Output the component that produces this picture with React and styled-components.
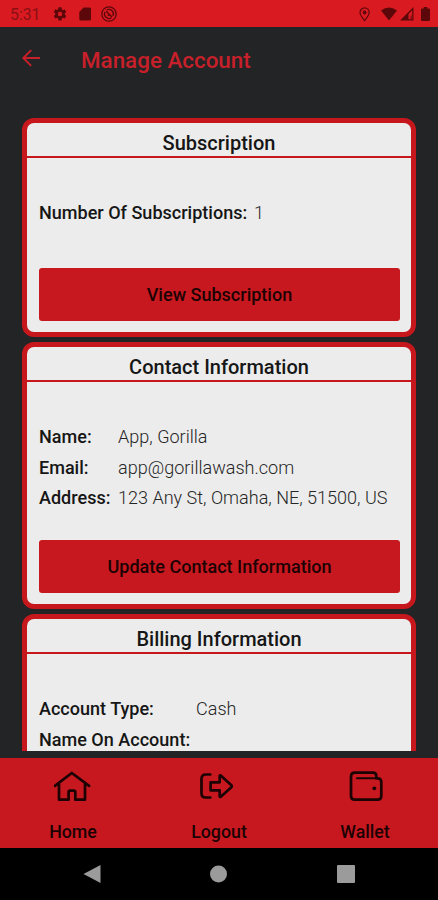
import React from 'react'
import styled, { createGlobalStyle } from 'styled-components'

const GlobalStyle = createGlobalStyle`
  * {
    box-sizing: border-box;
  }
  body {
    margin: 0;
    background: #222425;
    font-family: Roboto, 'Liberation Sans', sans-serif;
    color: #161616;
  }
`

const Screen = styled.div`
  display: flex;
  flex-direction: column;
  height: 900px;
  overflow: hidden;
`

const StatusBar = styled.div`
  display: flex;
  justify-content: space-between;
  align-items: center;
  flex: none;
  height: 27px;
  padding: 1px 8px 0 10px;
  background: #da1a21;
  color: #5c080b;
  font-size: 15.8px;
`

const StatusGroup = styled.div`
  display: flex;
  align-items: center;
  gap: ${({ $gap }) => $gap}px;
`

const Clock = styled.span`
  width: 31.5px;
  color: #8a0f14;
`

const Header = styled.header`
  display: flex;
  align-items: center;
  flex: none;
  height: 65px;
  padding-left: 22px;
  color: #c8202a;
`

const BackButton = styled.button`
  display: flex;
  width: 59px;
  padding: 0;
  border: 0;
  background: none;
  color: inherit;
  transform: translateY(-2px);
`

const PageTitle = styled.h1`
  margin: 0;
  font-size: 22.4px;
  line-height: 28px;
  font-weight: 500;
`

const Content = styled.main`
  flex: none;
  height: 659px;
  padding: 26px 22px 0;
  overflow: hidden;
`

const Card = styled.section`
  height: ${({ $height }) => $height}px;
  margin-bottom: 5px;
  border: 5px solid #c6171d;
  border-radius: 12px;
  background: #ececec;
`

const CardTitle = styled.h2`
  margin: 0;
  height: 35px;
  padding-top: 4px;
  border-bottom: 2px solid #c6171d;
  font-size: 20px;
  line-height: 32px;
  font-weight: 500;
  text-align: center;
`

const CardBody = styled.div`
  padding: 39px 11px 0 12px;
`

const Row = styled.div`
  display: flex;
  height: 30.6px;
  line-height: 31px;
  font-size: 18.05px;
  white-space: nowrap;
`

const Label = styled.span`
  flex: none;
  width: ${({ $width }) => $width}px;
  font-weight: 500;
`

const Value = styled.span`
  color: #262626;
  font-weight: 300;
`

const ActionButton = styled.button`
  display: block;
  width: 100%;
  height: 53px;
  margin-top: ${({ $top }) => $top}px;
  padding: 1px 0 0;
  border: 0;
  border-radius: 3px;
  background: #c7181f;
  color: #1c0203;
  font-family: inherit;
  font-size: 18.05px;
  font-weight: 500;
`

const TabBar = styled.nav`
  display: grid;
  grid-template-columns: repeat(3, 1fr);
  flex: none;
  height: 90px;
  margin-top: 7px;
  background: #c7181f;
`

const Tab = styled.a`
  display: flex;
  flex-direction: column;
  align-items: center;
  padding-top: 9px;
  color: #1c0203;
  font-size: 17.8px;
  line-height: 22px;
  font-weight: 500;

  svg {
    margin-bottom: 14px;
  }
`

const SystemBar = styled.div`
  display: flex;
  justify-content: space-between;
  align-items: center;
  flex: 1;
  padding: 0 83.5px 0 83px;
  background: #000;
`

const GearIcon = () => (
  <svg width="16" height="16" viewBox="0 0 24 24" fill="currentColor">
    <path fillRule="evenodd" d="M19.14 12.94a7 7 0 0 0 0-1.88l2.03-1.58a.5.5 0 0 0 .12-.61l-1.92-3.32a.5.5 0 0 0-.59-.22l-2.39.96a7 7 0 0 0-1.62-.94l-.36-2.54A.5.5 0 0 0 13.93 2h-3.84a.5.5 0 0 0-.48.41l-.36 2.54a7 7 0 0 0-1.62.94l-2.39-.96a.5.5 0 0 0-.59.22L2.74 8.87a.5.5 0 0 0 .12.61l2.03 1.58a7 7 0 0 0 0 1.88l-2.03 1.58a.5.5 0 0 0-.12.61l1.92 3.32c.12.22.37.29.59.22l2.39-.96c.5.38 1.03.7 1.62.94l.36 2.54c.05.24.24.41.48.41h3.84c.24 0 .44-.17.47-.41l.36-2.54a7 7 0 0 0 1.62-.94l2.39.96c.22.08.47 0 .59-.22l1.92-3.32a.5.5 0 0 0-.12-.61ZM12 15.3a3.3 3.3 0 1 1 0-6.6 3.3 3.3 0 0 1 0 6.6Z" />
  </svg>
)

const SdIcon = () => (
  <svg width="12" height="14" viewBox="0 0 12 14" fill="currentColor">
    <path d="M4.5 0.5H10.5Q12 0.5 12 2V12Q12 13.5 10.5 13.5H1.5Q0.3 13.5 0.3 12V5Z" />
  </svg>
)

const SyncOffIcon = () => (
  <svg width="16" height="16" viewBox="0 0 16 16" fill="none" stroke="currentColor">
    <circle cx="8" cy="8" r="7.2" strokeWidth="1.3" />
    <path d="M5.6 4.2A4.5 4.5 0 0 1 12 10M10.4 11.8A4.5 4.5 0 0 1 4 6" strokeWidth="1.3" />
    <path d="M5.2 5.2L11 11M7 8.6Q7.4 9.4 8.4 9.4" strokeWidth="1.4" />
  </svg>
)

const PinIcon = () => (
  <svg width="18.5" height="15" viewBox="0 0 18.5 15" fill="none" stroke="currentColor" strokeWidth="1.2">
    <path d="M5.6 13.6C3 10.5 1 8 1 5.5A4.6 4.6 0 0 1 10.2 5.5C10.2 8 8.2 10.5 5.6 13.6Z" />
    <circle cx="5.6" cy="5.5" r="1.3" fill="currentColor" />
  </svg>
)

const WifiIcon = () => (
  <svg width="16" height="14" viewBox="0 0 16 14" fill="currentColor">
    <path d="M0 3.5Q8 -2.5 16 3.5L8 13.5Z" />
  </svg>
)

const SignalIcon = () => (
  <svg width="18.5" height="14" viewBox="0 0 18.5 14" fill="currentColor">
    <path d="M0 13.5L13.5 0V13.5ZM8.5 12.3H12.3V3.3L8.5 7Z" fillRule="evenodd" />
    <path d="M10.3 8.5H12.3V13H10.3Z" opacity="0.5" />
  </svg>
)

const BatteryIcon = () => (
  <svg width="9" height="14" viewBox="0 0 9 14" fill="currentColor">
    <path d="M2.7 0H6.3V1.4H8Q9 1.4 9 2.4V13Q9 14 8 14H1Q0 14 0 13V2.4Q0 1.4 1 1.4H2.7Z" />
  </svg>
)

const BackIcon = () => (
  <svg width="19" height="18" viewBox="0 0 19 18" fill="none" stroke="currentColor" strokeWidth="2">
    <path d="M18 9H1.6M9.2 1.1L1.3 9L9.2 16.9" />
  </svg>
)

const TabIcon = styled.svg.attrs({ width: 38, height: 40, viewBox: '0 0 38 40' })`
  fill: none;
  stroke: currentColor;
  stroke-width: 2.7;
  stroke-linecap: round;
  stroke-linejoin: round;
`

const HomeIcon = () => (
  <TabIcon>
    <path d="M0.9 18.9L17.8 6L35.1 18.9M5 17V32.7H14.6V25.2Q14.6 23.7 16.1 23.7H19.8Q21.3 23.7 21.3 25.2V32.7H31V17" />
  </TabIcon>
)

const LogoutIcon = () => (
  <TabIcon>
    <path d="M10.3 7.5H5.8Q1.5 7.5 1.5 11.8V26.2Q1.5 30.5 5.8 30.5H10.3" />
    <path d="M19.7 9Q19.9 7.9 21 8.7L31.4 18.2Q32.3 19.2 31.4 20.2L21 29.6Q19.9 30.4 19.7 29.3V23.3H10.6V15.3H19.7Z" />
  </TabIcon>
)

const WalletIcon = () => (
  <TabIcon>
    <path d="M30.3 11.3V8.9Q30.3 5.7 27.1 5.7H9Q5 5.7 5 9.7V28.9Q5 32.7 8.8 32.7H31.5Q35.3 32.7 35.3 28.9V15.1Q35.3 11.3 31.5 11.3" />
    <path d="M11 11.3H31.5" strokeWidth="2" />
    <circle cx="28.3" cy="21.3" r="1.9" fill="currentColor" stroke="none" />
  </TabIcon>
)

const tabs = [
  { name: 'Home', Icon: HomeIcon },
  { name: 'Logout', Icon: LogoutIcon },
  { name: 'Wallet', Icon: WalletIcon },
]

const App = () => {
  return (
    <Screen>
      <GlobalStyle />
      <StatusBar>
        <StatusGroup $gap={10.5}>
          <Clock>5:31</Clock>
          <GearIcon />
          <SdIcon />
          <SyncOffIcon />
        </StatusGroup>
        <StatusGroup $gap={3}>
          <PinIcon />
          <WifiIcon />
          <SignalIcon />
          <BatteryIcon />
        </StatusGroup>
      </StatusBar>

      <Header>
        <BackButton aria-label="Back"><BackIcon /></BackButton>
        <PageTitle>Manage Account</PageTitle>
      </Header>

      <Content>
        <Card $height={219}>
          <CardTitle>Subscription</CardTitle>
          <CardBody>
            <Row>
              <Label $width={215}>Number Of Subscriptions:</Label>
              <Value>1</Value>
            </Row>
            <ActionButton $top={40}>View Subscription</ActionButton>
          </CardBody>
        </Card>

        <Card $height={267}>
          <CardTitle>Contact Information</CardTitle>
          <CardBody>
            <Row>
              <Label $width={79}>Name:</Label>
              <Value>App, Gorilla</Value>
            </Row>
            <Row>
              <Label $width={79}>Email:</Label>
              <Value>app@gorillawash.com</Value>
            </Row>
            <Row>
              <Label $width={79}>Address:</Label>
              <Value>123 Any St, Omaha, NE, 51500, US</Value>
            </Row>
            <ActionButton $top={27}>Update Contact Information</ActionButton>
          </CardBody>
        </Card>

        <Card $height={267}>
          <CardTitle>Billing Information</CardTitle>
          <CardBody>
            <Row>
              <Label $width={157}>Account Type:</Label>
              <Value>Cash</Value>
            </Row>
            <Row>
              <Label $width={157}>Name On Account:</Label>
            </Row>
          </CardBody>
        </Card>
      </Content>

      <TabBar>
        {tabs.map(({ name, Icon }) => (
          <Tab key={name}>
            <Icon />
            {name}
          </Tab>
        ))}
      </TabBar>

      <SystemBar>
        <svg width="18" height="20" viewBox="0 0 18 20" fill="#9b9b9b"><path d="M0.5 10L17.5 1V19Z" /></svg>
        <svg width="17" height="18" viewBox="0 0 17 18" fill="#9b9b9b"><circle cx="8.5" cy="9" r="8.5" /></svg>
        <svg width="18" height="18" viewBox="0 0 18 18" fill="#9b9b9b"><rect width="18" height="18" rx="1" /></svg>
      </SystemBar>
    </Screen>
  )
}

export default App
